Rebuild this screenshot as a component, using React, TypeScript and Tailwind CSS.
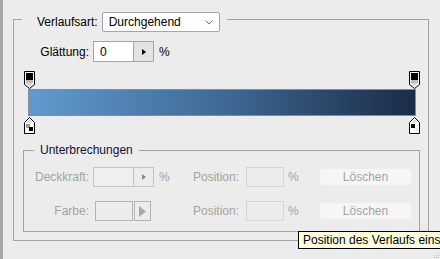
import { ReactNode } from "react";

const font = { fontFamily: '"Liberation Sans", Arial, sans-serif' };

const TopStop = () => (
  <svg width="11" height="18" viewBox="0 0 11 18">
    <path d="M0.5 0.5H10.5V13.5L5.5 17.5L0.5 13.5Z" fill="#fff" stroke="#000" />
    <rect x="2" y="2" width="7" height="7" fill="#000" />
    <rect x="2" y="9" width="7" height="3" fill="#bdbdbd" />
    <path d="M2 12H9L5.5 15.5Z" fill="#d6d6d6" />
  </svg>
);

const BottomStop = ({ right }: { right?: boolean }) => (
  <svg width="11" height="17" viewBox="0 0 11 17">
    <path d="M5.5 0.5L10.5 5.5V16.5H0.5V5.5Z" fill="#fff" stroke="#000" />
    <path d="M5.5 2.5L8.5 5.5H2.5Z" fill="#d6d6d6" />
    {right ? (
      <>
        <rect x="2" y="7" width="4" height="4" fill="#000" />
        <rect x="6" y="11" width="3" height="3" fill="#e6e6e6" />
      </>
    ) : (
      <>
        <rect x="2" y="7" width="4" height="4" fill="#9a9a9a" />
        <rect x="5" y="10" width="4" height="4" fill="#000" />
      </>
    )}
  </svg>
);

const Label = ({ children, w, dim }: { children: ReactNode; w: string; dim?: boolean }) => (
  <span className={`${w} shrink-0 text-right ${dim ? "text-[#a3a3a3]" : "text-black"}`}>{children}</span>
);

const PositionPart = () => (
  <div className="flex h-full items-center text-[#a3a3a3]">
    <span className="w-[53px]">Position:</span>
    <div className="h-full w-[38px] border border-[#d4d4d4] bg-[#ececec]" />
    <span className="ml-[4px] w-[32px]">%</span>
    <button className="h-[16px] w-[91px] rounded-[3px] bg-[#f6f6f6] text-[12px] text-[#a3a3a3]">
      Löschen
    </button>
  </div>
);

export default function App() {
  return (
    <div
      className="relative flex h-[259px] w-[440px] overflow-hidden bg-[#ececec] text-[12px] leading-none"
      style={font}
    >
      <div className="h-full w-[3px] shrink-0 bg-[#a6a6a6]" />

      <div className="ml-[10px] mt-[19px] h-[222px] w-[416px] shrink-0 border border-[#a3a3a3]">
        {/* Verlaufsart */}
        <div className="-mt-[8px] ml-[8px] flex h-[20px] w-fit items-center bg-[#ececec] pl-[15px] pr-[7px]">
          <span>Verlaufsart:</span>
          <div className="ml-[4px] flex h-[20px] w-[118px] items-center justify-between rounded-[2px] border border-[#a6a6a6] bg-white pl-[6px] pr-[6px]">
            <span>Durchgehend</span>
            <svg width="8" height="5" viewBox="0 0 8 5">
              <path d="M0.5 0.5L4 4L7.5 0.5" fill="none" stroke="#6b6b6b" />
            </svg>
          </div>
        </div>

        {/* Glättung */}
        <div className="mt-[9px] flex h-[21px] items-center">
          <Label w="w-[75px]">Glättung:</Label>
          <div className="ml-[4px] flex h-full w-[61px] border border-[#a6a6a6]">
            <div className="flex w-[39px] items-center bg-white pl-[6px]">0</div>
            <div className="flex flex-1 items-center justify-center border-l border-[#a6a6a6] bg-[#e3e3e3]">
              <svg width="4" height="6" viewBox="0 0 4 6">
                <path d="M0 0L4 3L0 6Z" fill="#000" />
              </svg>
            </div>
          </div>
          <span className="ml-[5px]">%</span>
        </div>

        {/* Verlauf */}
        <div className="ml-[10px] mt-[9px] flex h-[18px] w-[396px] justify-between">
          <TopStop />
          <TopStop />
        </div>
        <div className="ml-[14px] h-[27px] w-[388px] border border-[#8a8a8a] bg-gradient-to-r from-[#629ad0] via-[#3f6a95] to-[#1b2c48]" />
        <div className="ml-[10px] mt-[1px] flex h-[17px] w-[396px] justify-between">
          <BottomStop />
          <BottomStop right />
        </div>

        {/* Unterbrechungen */}
        <div className="ml-[9px] mt-[16px] h-[82px] w-[397px] border border-[#a3a3a3]">
          <div className="-mt-[8px] ml-[10px] flex h-[14px] w-fit items-center bg-[#ececec] px-[6px] text-[#10103a]">
            Unterbrechungen
          </div>

          <div className="mt-[10px] flex h-[20px] items-center">
            <div className="flex h-full w-[169px] items-center">
              <Label w="w-[65px]" dim>
                Deckkraft:
              </Label>
              <div className="ml-[4px] flex h-full w-[61px] border border-[#c4c4c4]">
                <div className="w-[39px] bg-[#efefef]" />
                <div className="flex flex-1 items-center justify-center border-l border-[#c4c4c4] bg-[#ececec]">
                  <svg width="4" height="6" viewBox="0 0 4 6">
                    <path d="M0 0L4 3L0 6Z" fill="#8a8a8a" />
                  </svg>
                </div>
              </div>
              <span className="ml-[5px] text-[#a3a3a3]">%</span>
            </div>
            <PositionPart />
          </div>

          <div className="mt-[14px] flex h-[20px] items-center">
            <div className="flex h-full w-[169px] items-center">
              <Label w="w-[65px]" dim>
                Farbe:
              </Label>
              <div className="ml-[6px] h-full w-[38px] border border-[#b4b4b4]" />
              <div className="ml-[1px] flex h-full w-[17px] items-center justify-center border border-[#b4b4b4]">
                <svg width="7" height="11" viewBox="0 0 7 11">
                  <path d="M0 0L7 5.5L0 11Z" fill="#a8a8a8" />
                </svg>
              </div>
            </div>
            <PositionPart />
          </div>
        </div>
      </div>

      {/* Tooltip */}
      <div className="absolute left-[298px] top-[231px] flex h-[18px] items-center whitespace-nowrap border border-black bg-[#ffffe1] px-[4px] text-black">
        Position des Verlaufs einstellen
      </div>

      {/* Resize grip */}
      <svg className="absolute bottom-0 right-0" width="6" height="6" viewBox="0 0 6 6">
        <rect x="4" y="0" width="1" height="1" fill="#bdbdbd" />
        <rect x="2" y="2" width="1" height="1" fill="#bdbdbd" />
        <rect x="4" y="2" width="1" height="1" fill="#bdbdbd" />
        <rect x="0" y="4" width="1" height="1" fill="#bdbdbd" />
        <rect x="2" y="4" width="1" height="1" fill="#bdbdbd" />
        <rect x="4" y="4" width="1" height="1" fill="#bdbdbd" />
      </svg>
    </div>
  );
}
